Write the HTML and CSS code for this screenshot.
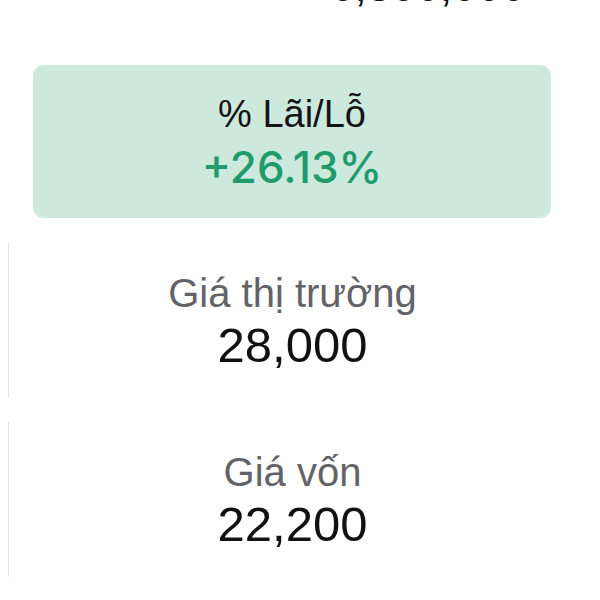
FILE: index.html
```html
<!DOCTYPE html>
<html lang="vi">
<head>
  <meta charset="UTF-8">
  <meta name="viewport" content="width=device-width, initial-scale=1.0">
  <title>Lãi/Lỗ</title>
  <link rel="stylesheet" href="styles.css">
</head>
<body>

  <!-- Tổng giá trị (bị cắt phía trên) -->
  <div class="tong">
    <div class="tong-so">6,300,000</div>
  </div>

  <!-- Lãi/Lỗ -->
  <div class="lai-lo">
    <div class="nhan-den">% Lãi/Lỗ</div>
    <div class="phan-tram">+26.13%</div>
  </div>

  <!-- Giá -->
  <div class="o-gia">
    <div class="nhan">Giá thị trường</div>
    <div class="gia-tri">28,000</div>
  </div>

  <div class="o-gia">
    <div class="nhan">Giá vốn</div>
    <div class="gia-tri">22,200</div>
  </div>

</body>
</html>
```

FILE: styles.css
```css
* {
  box-sizing: border-box;
}

body {
  margin: 0;
  padding: 0;
  font-family: 'Liberation Sans', Arial, sans-serif;
  background: #fff;
  color: #111;
}

.tong {
  height: 10px;
  overflow: hidden;
  padding-left: 330px;
}

.tong-so {
  font-size: 44px;
  line-height: 44px;
  margin-top: -36px;
  color: #111;
}

.lai-lo {
  margin: 55px 49px 0 33px;
  height: 153px;
  padding-top: 25px;
  background: #cde9de;
  border-radius: 11px;
  text-align: center;
}

.nhan-den {
  font-size: 38px;
  line-height: 48px;
  color: #141414;
}

.phan-tram {
  margin-top: 3px;
  font-family: Inter, 'Liberation Sans', sans-serif;
  font-weight: 500;
  font-size: 44px;
  line-height: 52px;
  color: #1f9b6c;
}

.o-gia {
  margin: 25px 24px 0 8px;
  height: 155px;
  padding-top: 28px;
  border-left: 1px solid #e4e4e4;
  text-align: center;
}

.o-gia + .o-gia {
  margin-top: 24px;
}

.nhan {
  font-size: 40px;
  line-height: 44px;
  color: #626267;
}

.gia-tri {
  margin-top: 4px;
  font-size: 49px;
  line-height: 52px;
  color: #111;
}
```
